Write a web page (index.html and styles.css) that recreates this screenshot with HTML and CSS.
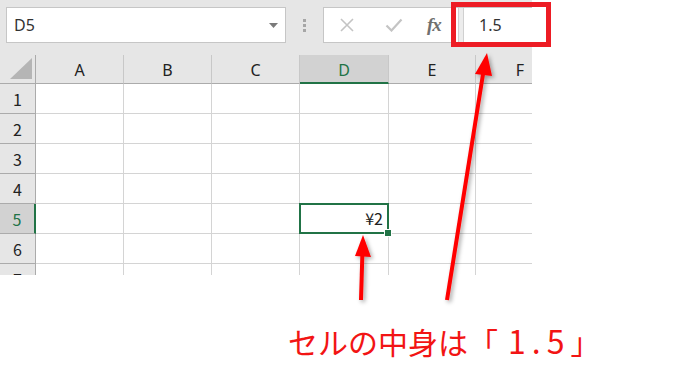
FILE: index.html
```html
<!DOCTYPE html>
<html lang="ja">
<head>
<meta charset="utf-8">
<link rel="stylesheet" href="styles.css">
</head>
<body>
<div class="page">
  <div class="excel">
    <div class="toolbar">
      <div class="namebox">
        <span class="name">D5</span>
        <svg class="dd" width="9" height="5" viewBox="0 0 9 5"><path d="M0 0H9L4.5 5Z" fill="#7a7a7a"/></svg>
      </div>
      <div class="dots"><i></i><i></i><i></i></div>
      <div class="formula">
        <div class="btns">
          <svg class="ico" width="16" height="16" viewBox="0 0 16 16"><path d="M2 2L14 14M14 2L2 14" stroke="#c4c4c4" stroke-width="1.6" fill="none"/></svg>
          <svg class="ico" width="18" height="14" viewBox="0 0 18 14"><path d="M1.5 7.5L6.5 12.5L16.5 1.5" stroke="#c4c4c4" stroke-width="2.2" fill="none"/></svg>
          <span class="fx">fx</span>
        </div>
        <div class="sep"></div>
        <div class="input">1.5</div>
      </div>
    </div>
    <div class="grid">
      <div class="corner"><svg width="22" height="21" viewBox="0 0 22 21"><path d="M22 0V21H0Z" fill="#b5b5b5"/></svg></div>
      <div class="ch">A</div><div class="ch">B</div><div class="ch">C</div><div class="ch sel">D</div><div class="ch">E</div><div class="ch last">F</div>

      <div class="rh">1</div><div class="c"></div><div class="c"></div><div class="c"></div><div class="c"></div><div class="c"></div><div class="c last"></div>
      <div class="rh">2</div><div class="c"></div><div class="c"></div><div class="c"></div><div class="c"></div><div class="c"></div><div class="c last"></div>
      <div class="rh">3</div><div class="c"></div><div class="c"></div><div class="c"></div><div class="c"></div><div class="c"></div><div class="c last"></div>
      <div class="rh">4</div><div class="c"></div><div class="c"></div><div class="c"></div><div class="c"></div><div class="c"></div><div class="c last"></div>
      <div class="rh sel">5</div><div class="c"></div><div class="c"></div><div class="c"></div><div class="c active"><span class="val">¥2</span><span class="frame"></span><span class="handle"></span></div><div class="c"></div><div class="c last"></div>
      <div class="rh">6</div><div class="c"></div><div class="c"></div><div class="c"></div><div class="c"></div><div class="c"></div><div class="c last"></div>
      <div class="rh">7</div><div class="c"></div><div class="c"></div><div class="c"></div><div class="c"></div><div class="c"></div><div class="c last"></div>
    </div>
  </div>
  <div class="note">セルの中身は「<span class="num">1.5</span>」</div>

  <div class="redbox"></div>
  <svg class="arrows" width="697" height="383" viewBox="0 0 697 383">
    <defs>
      <filter id="sh" x="-50%" y="-50%" width="200%" height="200%">
        <feDropShadow dx="2" dy="2" stdDeviation="2" flood-color="#000" flood-opacity="0.35"/>
      </filter>
    </defs>
    <g filter="url(#sh)" fill="#ff0000" stroke="#ff0000">
      <line x1="361" y1="300" x2="362.5" y2="250" stroke-width="4"/>
      <path d="M363 235L371 257L355 256Z" stroke="none"/>
      <line x1="447" y1="300" x2="484" y2="68" stroke-width="4"/>
      <path d="M487 53L492 76L475 74Z" stroke="none"/>
    </g>
  </svg>
</div>
</body>
</html>
```

FILE: styles.css
```css
html, body {
  margin: 0;
  padding: 0;
  background: #fff;
}
.page {
  position: relative;
  width: 697px;
  height: 383px;
  overflow: hidden;
  background: #fff;
  font-family: "Noto Sans", "Noto Sans CJK JP", sans-serif;
}
.excel {
  width: 532px;
  height: 275px;
  overflow: hidden;
  background: #e6e6e6;
}
.toolbar {
  height: 55px;
  display: flex;
  align-items: flex-start;
  padding-top: 7px;
  padding-left: 6px;
  box-sizing: border-box;
}
.namebox {
  width: 280px;
  height: 36px;
  box-sizing: border-box;
  background: #fff;
  border: 1px solid #c6c6c6;
  display: flex;
  align-items: center;
  justify-content: space-between;
  padding: 0 7px 0 7px;
}
.name {
  font-size: 16px;
  color: #333;
  font-family: "Noto Sans", sans-serif;
}
.dd { margin-top: 1px; }
.dots {
  width: 37px;
  height: 36px;
  display: flex;
  flex-direction: column;
  align-items: center;
  justify-content: center;
  gap: 2px;
}
.dots i {
  display: block;
  width: 3px;
  height: 3px;
  background: #a6a6a6;
}
.formula {
  flex: 1;
  height: 36px;
  display: flex;
  background: #fff;
  border: 1px solid #c6c6c6;
  border-right: none;
  box-sizing: border-box;
}
.btns {
  width: 134px;
  display: flex;
  align-items: center;
  padding-left: 15px;
  box-sizing: border-box;
}
.btns .ico:first-child { margin-right: 30px; }
.btns .ico:nth-child(2) { margin-right: 24px; }
.fx {
  font-family: "Liberation Serif", "DejaVu Serif", serif;
  font-style: italic;
  font-weight: bold;
  font-size: 19px;
  color: #707070;
  letter-spacing: -1px;
}
.sep {
  width: 4px;
  border-left: 1px solid #d0d0d0;
  border-right: 1px solid #d0d0d0;
  background: #ececec;
}
.input {
  flex: 1;
  padding-left: 15px;
  font-size: 16px;
  line-height: 34px;
  color: #333;
  font-family: "Noto Sans", sans-serif;
}
.grid {
  display: grid;
  grid-template-columns: 36px 88px 88px 88px 89px 87px 56px;
  grid-template-rows: 29px repeat(7, 30px);
  background: #fff;
}
.corner {
  background: #e6e6e6;
  border-right: 1px solid #ababab;
  border-bottom: 1px solid #ababab;
  display: flex;
  align-items: flex-end;
  justify-content: flex-end;
  padding: 0 3px 4px 0;
  box-sizing: border-box;
}
.ch {
  background: #e6e6e6;
  border-right: 1px solid #c8c8c8;
  border-bottom: 1px solid #ababab;
  box-sizing: border-box;
  display: flex;
  align-items: center;
  justify-content: center;
  font-size: 16px;
  color: #222;
  padding-top: 2px;
}
.ch.last { border-right: none; justify-content: flex-end; padding-right: 8px; }
.ch.sel {
  background: #d2d2d2;
  color: #217346;
  border-bottom: 2px solid #217346;
}
.rh {
  background: #e6e6e6;
  border-right: 1px solid #ababab;
  border-bottom: 1px solid #ababab;
  box-sizing: border-box;
  display: flex;
  align-items: center;
  justify-content: center;
  font-size: 16px;
  color: #222;
  font-family: "Noto Sans CJK JP", sans-serif;
}
.rh.sel {
  background: #d2d2d2;
  color: #217346;
  border-right: 2px solid #217346;
}
.c {
  border-right: 1px solid #d4d4d4;
  border-bottom: 1px solid #d4d4d4;
  box-sizing: border-box;
}
.c.last { border-right: none; }
.c.active {
  position: relative;
}
.val {
  position: absolute;
  right: 5px;
  top: 2px;
  font-size: 16px;
  color: #222;
  font-family: "Noto Sans CJK JP", sans-serif;
}
.frame {
  position: absolute;
  left: -1px;
  top: -1px;
  right: -1px;
  bottom: -1px;
  border: 2px solid #217346;
}
.handle {
  position: absolute;
  right: -4px;
  bottom: -4px;
  width: 6px;
  height: 6px;
  background: #217346;
  border: 1px solid #fff;
}
.note {
  margin-top: 45px;
  padding-left: 288px;
  font-family: "Noto Sans CJK JP", sans-serif;
  font-size: 30px;
  line-height: 40px;
  color: #f21414;
}
.note .num {
  font-size: 32px;
  letter-spacing: 6px;
  margin-left: 10px;
}
.redbox {
  position: absolute;
  left: 451px;
  top: 2px;
  width: 100px;
  height: 45px;
  box-sizing: border-box;
  border: 5px solid #ed1c24;
}
.arrows {
  position: absolute;
  left: 0;
  top: 0;
}
```
